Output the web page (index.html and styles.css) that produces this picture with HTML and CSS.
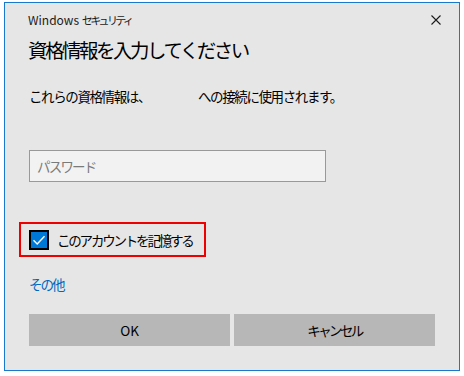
FILE: index.html
```html
<!DOCTYPE html>
<html lang="ja">
<head>
    <meta charset="UTF-8">
    <title>Windows セキュリティ</title>
    <link rel="stylesheet" href="styles.css">
</head>
<body>
    <div class="dialog">
        <div class="titlebar">
            <span class="title">Windows <span class="kana">セキュリティ</span></span>
            <svg class="close" width="12" height="12" viewBox="0 0 12 12">
                <path d="M1.5 1.5 L10.5 10.5 M10.5 1.5 L1.5 10.5" stroke="#1b1b1b" stroke-width="1.1" fill="none"/>
            </svg>
        </div>
        <div class="content">
            <h1>資格情報を入力してください</h1>
            <p class="info">これらの資格情報は、<span class="host"></span>への接続に使用されます。</p>
            <div class="password">パスワード</div>
            <div class="remember">
                <svg class="checkbox" width="20" height="20" viewBox="0 0 20 20">
                    <rect x="1" y="1" width="18" height="18" fill="#0078d7" stroke="#000" stroke-width="2"/>
                    <path d="M4.5 10.3 L8.2 14 L15.5 6.2" stroke="#fff" stroke-width="1.4" fill="none"/>
                </svg>
                <span>このアカウントを記憶する</span>
            </div>
            <a class="more" href="#">その他</a>
            <div class="buttons">
                <div class="btn">OK</div>
                <div class="btn jp">キャンセル</div>
            </div>
        </div>
    </div>
</body>
</html>
```

FILE: styles.css
```css
body {
    margin: 0;
    background: #ffffff;
    font-family: "Noto Sans CJK JP", "Noto Sans", sans-serif;
    color: #000000;
}

.dialog {
    box-sizing: border-box;
    width: 456px;
    height: 369px;
    margin: 2px 0 0 4px;
    background: #e6e6e6;
    border: 1px solid #1979ca;
}

.titlebar {
    display: flex;
    align-items: center;
    justify-content: space-between;
    height: 32px;
    padding: 0 17px 0 23px;
}

.title {
    font-size: 12px;
    color: #1b1b1b;
    white-space: nowrap;
}

.title .kana {
    font-size: 11px;
    letter-spacing: -2.6px;
}

.close {
    margin-top: 2px;
}

.content {
    padding: 0 24px;
}

h1 {
    margin: 1px 0 0 -1px;
    font-size: 19.5px;
    font-weight: normal;
    line-height: 28px;
    letter-spacing: -2.5px;
    white-space: nowrap;
}

.info {
    margin: 22px 0 0;
    font-size: 13.5px;
    line-height: 20px;
    letter-spacing: -1.4px;
    white-space: nowrap;
}

.host {
    display: inline-block;
    width: 48px;
}

.password {
    box-sizing: border-box;
    width: 297px;
    height: 32px;
    margin-top: 44px;
    padding-left: 7px;
    background: #f2f2f2;
    border: 1px solid #999999;
    color: #7a7a7a;
    font-size: 13.5px;
    line-height: 30px;
    letter-spacing: -1.8px;
}

.remember {
    box-sizing: border-box;
    display: flex;
    align-items: center;
    gap: 8px;
    width: 187px;
    height: 35px;
    margin: 40px 0 0 -10px;
    padding-left: 8px;
    border: 2px solid #ee0000;
    font-size: 13.5px;
    letter-spacing: -2.2px;
    white-space: nowrap;
}

.more {
    display: block;
    margin-top: 17px;
    color: #0067c0;
    font-size: 13.5px;
    line-height: 20px;
    letter-spacing: -2px;
    text-decoration: none;
}

.buttons {
    display: grid;
    grid-template-columns: 1fr 1fr;
    gap: 4px;
    margin-top: 20px;
}

.btn {
    height: 32px;
    background: #b7b7b7;
    font-size: 13.5px;
    line-height: 32px;
    text-align: center;
}

.btn.jp {
    letter-spacing: -2.6px;
}
```
